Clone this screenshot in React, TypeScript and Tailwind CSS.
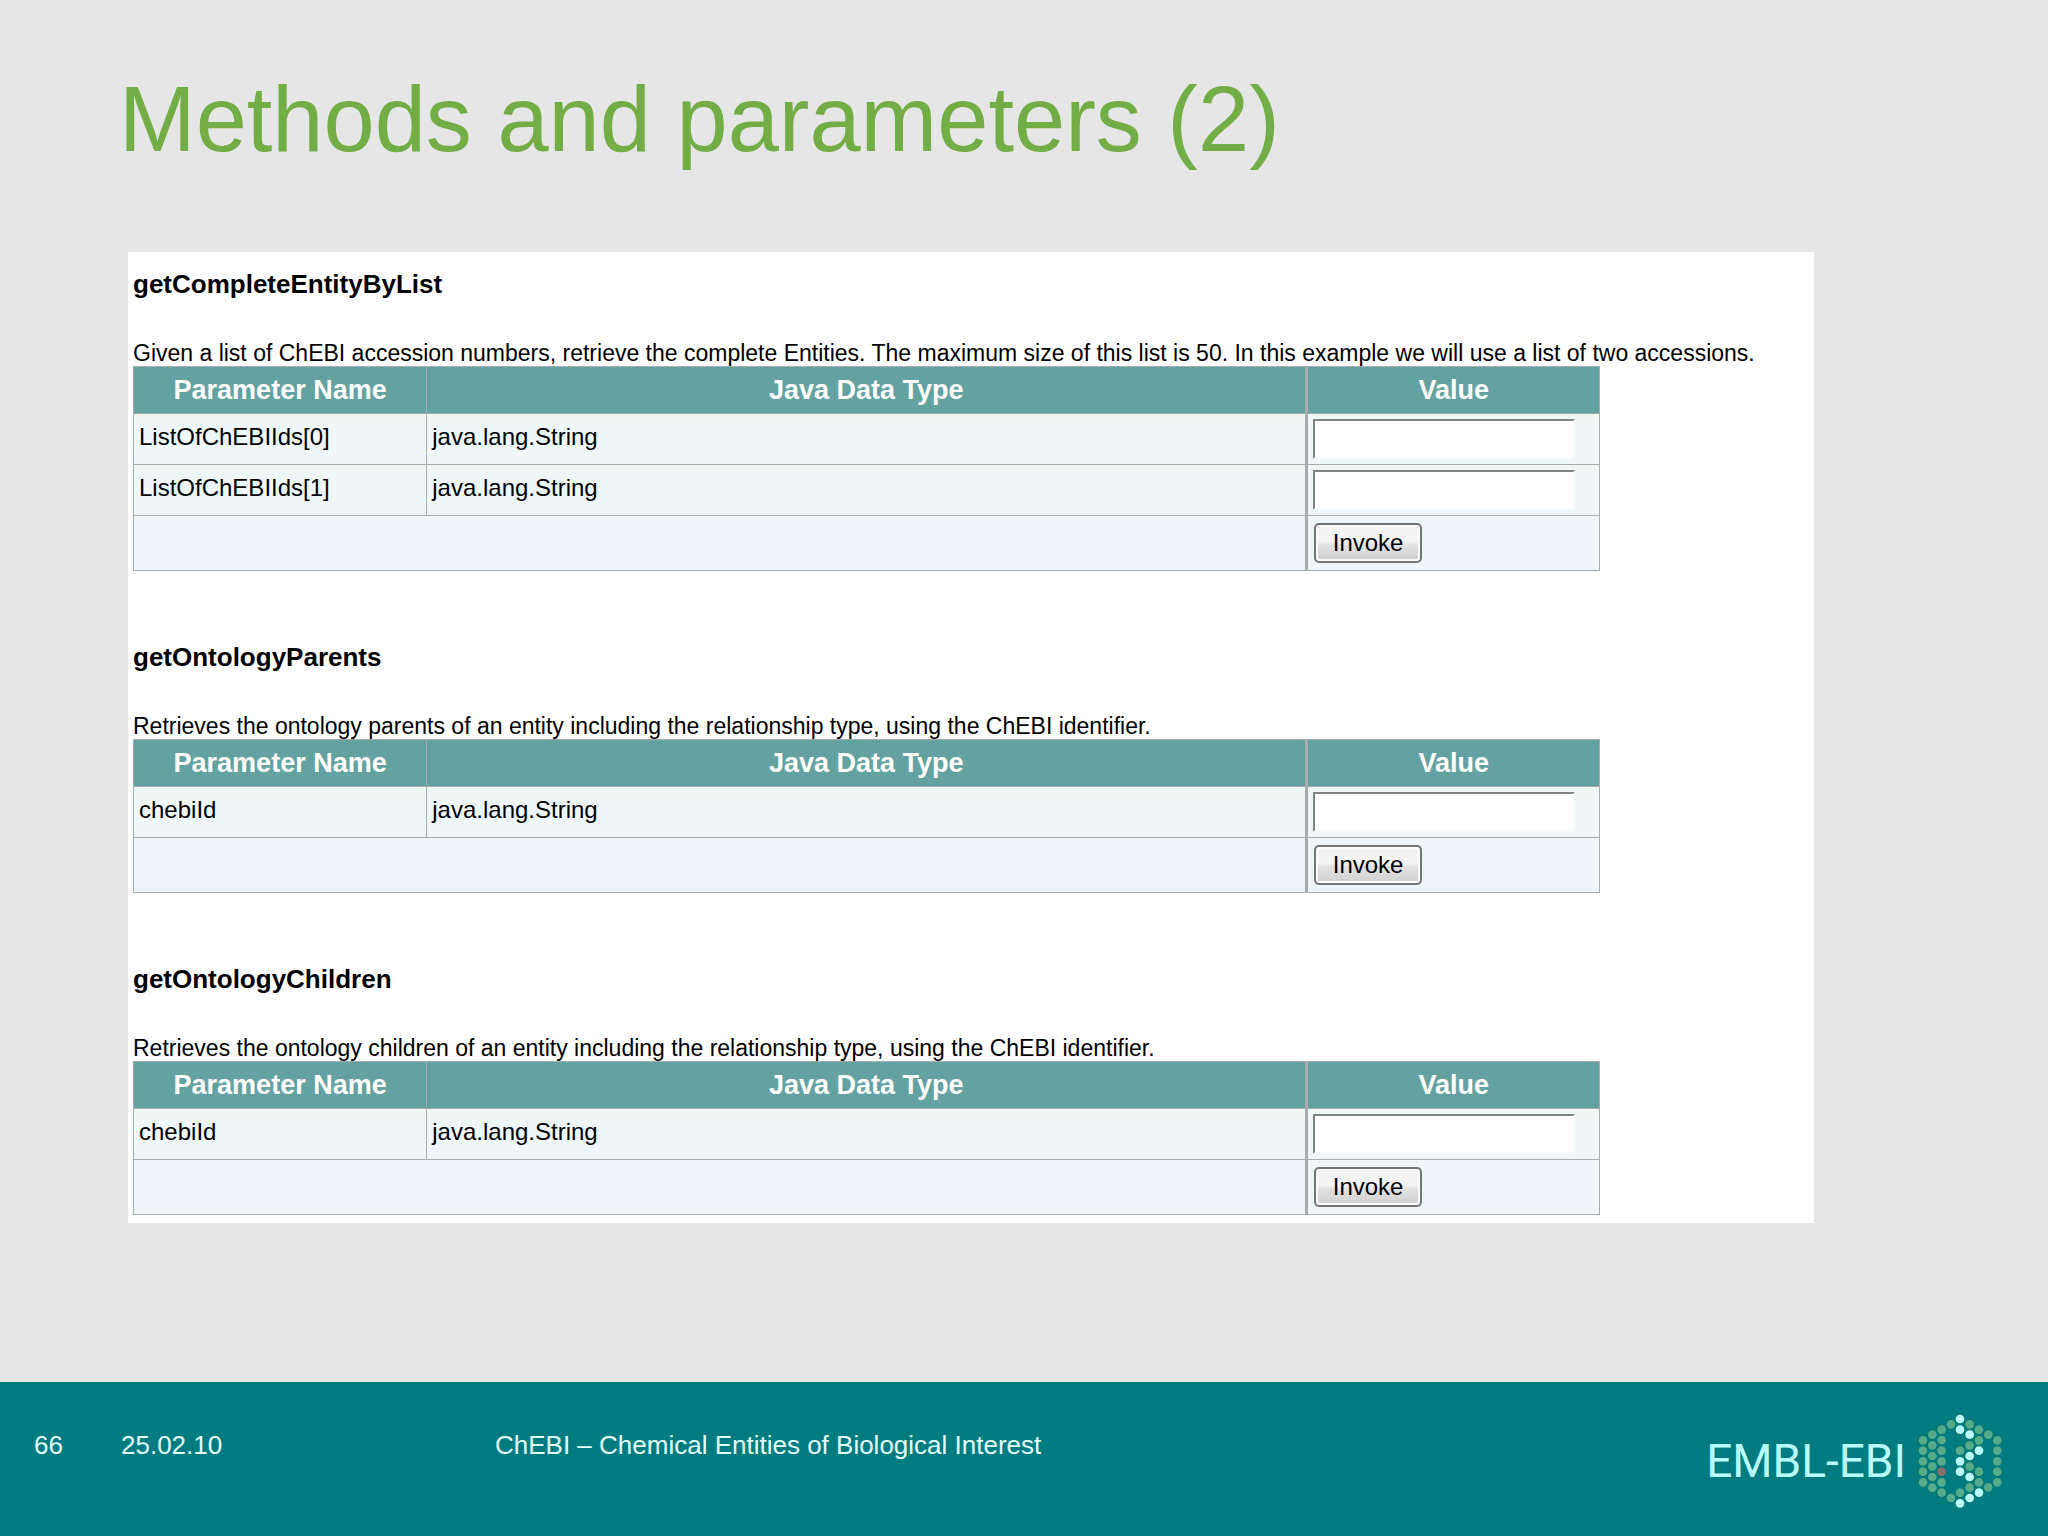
type Param = { name: string; type: string };
type Method = { name: string; description: string; params: Param[] };

const methods: Method[] = [
  {
    name: "getCompleteEntityByList",
    description:
      "Given a list of ChEBI accession numbers, retrieve the complete Entities. The maximum size of this list is 50. In this example we will use a list of two accessions.",
    params: [
      { name: "ListOfChEBIIds[0]", type: "java.lang.String" },
      { name: "ListOfChEBIIds[1]", type: "java.lang.String" },
    ],
  },
  {
    name: "getOntologyParents",
    description:
      "Retrieves the ontology parents of an entity including the relationship type, using the ChEBI identifier.",
    params: [{ name: "chebiId", type: "java.lang.String" }],
  },
  {
    name: "getOntologyChildren",
    description:
      "Retrieves the ontology children of an entity including the relationship type, using the ChEBI identifier.",
    params: [{ name: "chebiId", type: "java.lang.String" }],
  },
];

function MethodSection({ method }: { method: Method }) {
  return (
    <section>
      <h2 className="text-[26px] leading-8 font-bold">{method.name}</h2>
      <p className="mt-10 text-[23px] leading-[26px]">{method.description}</p>
      <form onSubmit={(e) => e.preventDefault()}>
        <table className="w-[87.5%] table-fixed border-collapse border border-[#a6adae]">
          <colgroup>
            <col className="w-[20%]" />
            <col className="w-[60%]" />
            <col className="w-[20%]" />
          </colgroup>
          <thead>
            <tr className="h-[47px] bg-[#64a2a2] text-[27px] leading-8 text-white">
              <th className="border border-[#a6adae] p-0">Parameter Name</th>
              <th className="border border-[#a6adae] p-0">Java Data Type</th>
              <th className="border border-l-3 border-[#a6adae] p-0">Value</th>
            </tr>
          </thead>
          <tbody className="text-2xl leading-7">
            {method.params.map((p) => (
              <tr key={p.name} className="h-[51px] bg-linear-to-b from-[#eef8f5] to-[#eff6fa]">
                <td className="border border-[#a6adae] p-0 pb-1 pl-[5px]">
                  <label htmlFor={method.name + p.name}>{p.name}</label>
                </td>
                <td className="border border-[#a6adae] p-0 pb-1 pl-[5px]">{p.type}</td>
                <td className="border border-l-3 border-[#a6adae] p-0 pl-[5px]">
                  <input
                    id={method.name + p.name}
                    type="text"
                    className="block h-10 w-[262px] border-t-2 border-r-2 border-b-2 border-l-2 border-t-[#828587] border-r-[#f7fbfb] border-b-[#f7fbfb] border-l-[#828587] bg-white px-1 outline-none"
                  />
                </td>
              </tr>
            ))}
            <tr className="h-[55px] bg-[#eff6fa]">
              <td colSpan={2} className="border border-[#a6adae] p-0" />
              <td className="border border-l-3 border-[#a6adae] p-0 pl-1.5">
                <button
                  type="submit"
                  className="block h-10 w-[108px] rounded-[5px] border-2 border-[#757575] bg-linear-to-b from-[#f4f4f4] from-45% via-[#e2e2e2] via-55% to-[#d0d0d0] text-2xl leading-7 shadow-[inset_0_0_0_2px_#fafafa]"
                >
                  Invoke
                </button>
              </td>
            </tr>
          </tbody>
        </table>
      </form>
    </section>
  );
}

const W = "#b9ffff";
const G = "#53ad8c";
const R = "#86706f";

// Dots of the hexagonal mark, one row per column: x, then [y, colour] pairs.
const columns: [number, [number, string][]][] = [
  [729, [[151, G], [182, G], [214, G], [245, G], [277, G]]],
  [757, [[134, G], [166, G], [198, G], [229, G], [261, G], [293, G]]],
  [785, [[119, G], [150, G], [182, G], [214, G], [245, R], [277, G], [308, G]]],
  [813, [[103, G], [324, G]]],
  [840, [[87, W], [119, W], [182, G], [214, W], [245, W], [308, G], [340, W]]],
  [869, [[103, G], [134, W], [166, G], [198, W], [230, G], [261, W], [293, G], [324, W]]],
  [897, [[119, G], [151, G], [182, W], [245, G], [277, G], [308, W]]],
  [925, [[134, G], [292, G]]],
  [952, [[151, G], [182, G], [214, G], [245, G], [277, G]]],
];

function Logo() {
  return (
    <div className="flex items-center gap-3">
      <span className="font-[Roboto,'Liberation_Sans',sans-serif] text-[46px] leading-none text-[#b9ffff]">
        EMBL-EBI
      </span>
      <svg viewBox="714 72 252 282" className="h-[94px] w-[84px]" aria-hidden="true">
        {columns.map(([x, dots]) =>
          dots.map(([y, fill]) => (
            <g key={`${x}-${y}`}>
              <circle cx={x} cy={y} r="15" fill="#0f7468" />
              <circle cx={x} cy={y} r="13" fill={fill} />
            </g>
          )),
        )}
      </svg>
    </div>
  );
}

export default function App() {
  return (
    <div className="flex min-h-screen flex-col bg-[#e6e6e7] font-['Liberation_Sans',Arial,sans-serif] text-black">
      <header className="px-[119px] pt-[65px]">
        <h1 className="text-[92px] leading-[108px] text-[#73ad46]">Methods and parameters (2)</h1>
      </header>
      <main className="mt-[79px] mr-[234px] ml-32 flex flex-col gap-[70px] bg-white pt-4 pr-1 pb-2 pl-[5px]">
        {methods.map((m) => (
          <MethodSection key={m.name} method={m} />
        ))}
      </main>
      <footer className="mt-auto flex h-[154px] items-center bg-[#007c80] pr-[46px] pl-[34px] text-[26px] leading-8 text-[#e4ffff]">
        <span className="w-[87px] pb-7">66</span>
        <span className="w-[374px] pb-7">25.02.10</span>
        <span className="pb-7">ChEBI – Chemical Entities of Biological Interest</span>
        <div className="mt-1 ml-auto">
          <Logo />
        </div>
      </footer>
    </div>
  );
}
